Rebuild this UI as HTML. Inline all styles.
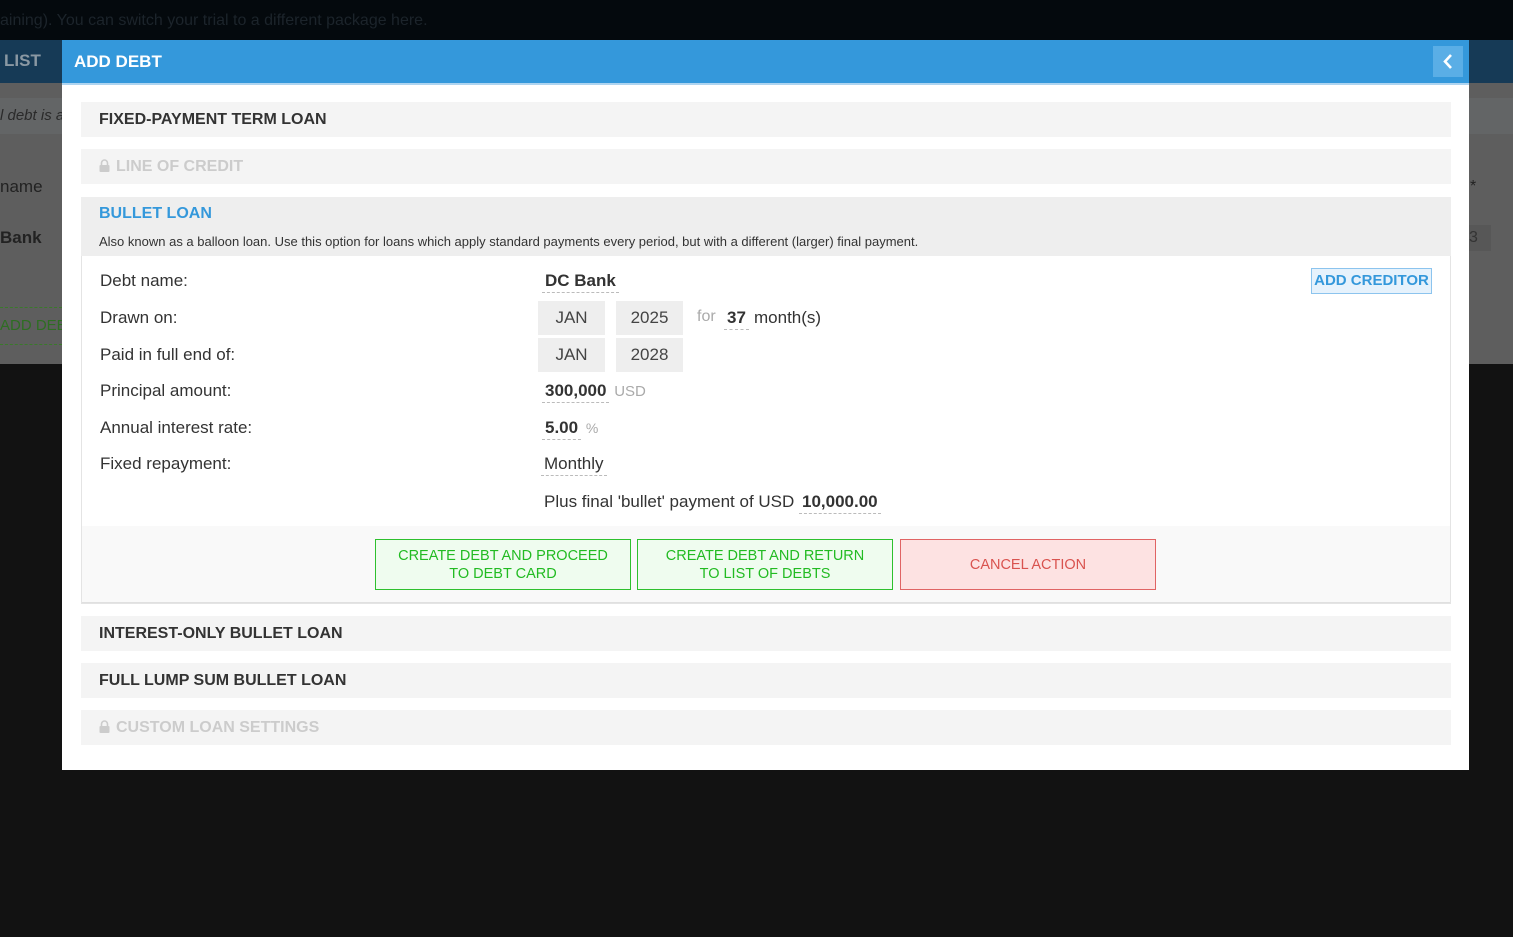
<!DOCTYPE html>
<html><head><meta charset="utf-8"><style>
*{margin:0;padding:0;box-sizing:border-box}
body{width:1513px;height:937px;background:#121212;font-family:"Liberation Sans",sans-serif;position:relative;overflow:hidden}
.a{position:absolute}
.sec{position:absolute;left:81px;width:1370px;background:#f4f4f4;font-size:16px;font-weight:bold;color:#333;padding-left:18px}
.lbl{position:absolute;left:100px;font-size:17px;color:#333}
.val{position:absolute;font-size:17px;color:#333}
.dash{border-bottom:1px dashed #bbb;padding:0 3px 2px}
.box{position:absolute;background:#eeeeee;height:34px;font-size:17px;color:#444;text-align:center;line-height:34px}
.btn{position:absolute;top:539px;height:51px;width:256px;font-size:14.5px;text-align:center;display:flex;align-items:center;justify-content:center;line-height:18px}
.lock{display:inline-block;width:11px;height:13px;margin-right:6px;vertical-align:-1px}
</style></head><body>
<div class="a" style="left:0;top:0;width:1513px;height:40px;background:#04090d"></div>
<div class="a" style="left:0;top:12px;font-size:16px;color:#1c242b;white-space:nowrap">aining). You can switch your trial to a different package here.</div>
<div class="a" style="left:0;top:40px;width:1513px;height:43px;background:#163a56"></div>
<div class="a" style="left:4px;top:51px;font-size:17px;font-weight:bold;color:#8a98a3">LIST</div>
<div class="a" style="left:0;top:83px;width:1513px;height:281px;background:#5e5e5e"></div>
<div class="a" style="left:0;top:98px;width:1513px;height:36px;background:#636566"></div>
<div class="a" style="left:0;top:107px;font-size:15px;font-style:italic;color:#2a2a2a">l debt is a</div>
<div class="a" style="left:0;top:177px;font-size:17px;color:#222">name</div>
<div class="a" style="left:0;top:228px;font-size:17px;font-weight:bold;color:#222">Bank</div>
<div class="a" style="left:0;top:307px;width:62px;height:38px;border-top:1px dashed #3a7a2a;border-bottom:1px dashed #3a7a2a;font-size:15px;color:#2e6e22;line-height:36px;white-space:nowrap;overflow:hidden">ADD DEBT</div>
<div class="a" style="left:1469px;top:225px;width:22px;height:26px;background:#575757;color:#333;font-size:16px;line-height:26px">3</div>
<div class="a" style="left:1470px;top:178px;color:#222;font-size:16px">*</div>

<div class="a" style="left:62px;top:40px;width:1407px;height:730px;background:#fff"></div>
<div class="a" style="left:62px;top:40px;width:1407px;height:43px;background:#3498db"></div>
<div class="a" style="left:62px;top:83px;width:1407px;height:2px;background:#aed4f0"></div>
<div class="a" style="left:74px;top:52px;font-size:17px;font-weight:bold;color:#fff">ADD DEBT</div>
<div class="a" style="left:1433px;top:46px;width:30px;height:31px;background:#5aaee6"></div>
<svg class="a" style="left:1440px;top:53px" width="16" height="17"><path d="M11 2 L5 8.5 L11 15" stroke="#fff" stroke-width="2.6" fill="none"/></svg>

<div class="sec" style="top:102px;height:35px;line-height:35px">FIXED-PAYMENT TERM LOAN</div>
<div class="sec" style="top:149px;height:35px;line-height:35px;color:#ccc"><svg class="lock" viewBox="0 0 11 13"><path d="M2.5 6V4a3 3 0 0 1 6 0v2" stroke="#ccc" stroke-width="1.6" fill="none"/><rect x="0.5" y="6" width="10" height="7" rx="1" fill="#ccc"/></svg>LINE OF CREDIT</div>
<div class="a" style="left:81px;top:197px;width:1370px;height:407px;border:1px solid #e4e4e4;background:#fff"></div>
<div class="a" style="left:81px;top:197px;width:1370px;height:59px;background:#eeeeee"></div>
<div class="a" style="left:99px;top:205px;font-size:16px;font-weight:bold;color:#3498db">BULLET LOAN</div>
<div class="a" style="left:99px;top:234px;font-size:13px;color:#333">Also known as a balloon loan. Use this option for loans which apply standard payments every period, but with a different (larger) final payment.</div>

<div class="lbl" style="top:271px">Debt name:</div>
<div class="lbl" style="top:308px">Drawn on:</div>
<div class="lbl" style="top:345px">Paid in full end of:</div>
<div class="lbl" style="top:381px">Principal amount:</div>
<div class="lbl" style="top:418px">Annual interest rate:</div>
<div class="lbl" style="top:454px">Fixed repayment:</div>

<div class="val" style="left:542px;top:271px;font-weight:bold"><span class="dash">DC Bank</span></div>
<div class="a" style="left:1311px;top:268px;width:121px;height:26px;border:1px solid #8cc4ee;background:#e6f2fc;color:#3498db;font-size:15px;font-weight:bold;text-align:center;line-height:24px">ADD CREDITOR</div>
<div class="box" style="left:538px;top:301px;width:67px">JAN</div>
<div class="box" style="left:616px;top:301px;width:67px">2025</div>
<div class="val" style="left:697px;top:308px;font-size:16px;color:#aaa">for</div>
<div class="val" style="left:724px;top:308px;font-weight:bold"><span class="dash">37</span></div>
<div class="val" style="left:754px;top:308px">month(s)</div>
<div class="box" style="left:538px;top:338px;width:67px">JAN</div>
<div class="box" style="left:616px;top:338px;width:67px">2028</div>
<div class="val" style="left:542px;top:381px;font-weight:bold"><span class="dash">300,000</span> <span style="font-weight:normal;font-size:15px;color:#aaa">USD</span></div>
<div class="val" style="left:542px;top:418px;font-weight:bold"><span class="dash">5.00</span> <span style="font-weight:normal;font-size:14px;color:#aaa">%</span></div>
<div class="val" style="left:541px;top:454px"><span class="dash">Monthly</span></div>
<div class="val" style="left:544px;top:492px">Plus final 'bullet' payment of USD <b><span class="dash">10,000.00</span></b></div>

<div class="a" style="left:82px;top:526px;width:1368px;height:77px;background:#f9f9f9;border-bottom:1px solid #e0e0e0"></div>
<div class="btn" style="left:375px;border:1px solid #2ec02e;background:#effcef;color:#22bb22">CREATE DEBT AND PROCEED<br>TO DEBT CARD</div>
<div class="btn" style="left:637px;border:1px solid #2ec02e;background:#effcef;color:#22bb22">CREATE DEBT AND RETURN<br>TO LIST OF DEBTS</div>
<div class="btn" style="left:900px;border:1px solid #e06464;background:#fde2e2;color:#d9534f">CANCEL ACTION</div>

<div class="sec" style="top:616px;height:35px;line-height:35px">INTEREST-ONLY BULLET LOAN</div>
<div class="sec" style="top:663px;height:35px;line-height:35px">FULL LUMP SUM BULLET LOAN</div>
<div class="sec" style="top:710px;height:35px;line-height:35px;color:#ccc"><svg class="lock" viewBox="0 0 11 13"><path d="M2.5 6V4a3 3 0 0 1 6 0v2" stroke="#ccc" stroke-width="1.6" fill="none"/><rect x="0.5" y="6" width="10" height="7" rx="1" fill="#ccc"/></svg>CUSTOM LOAN SETTINGS</div>
</body></html>
